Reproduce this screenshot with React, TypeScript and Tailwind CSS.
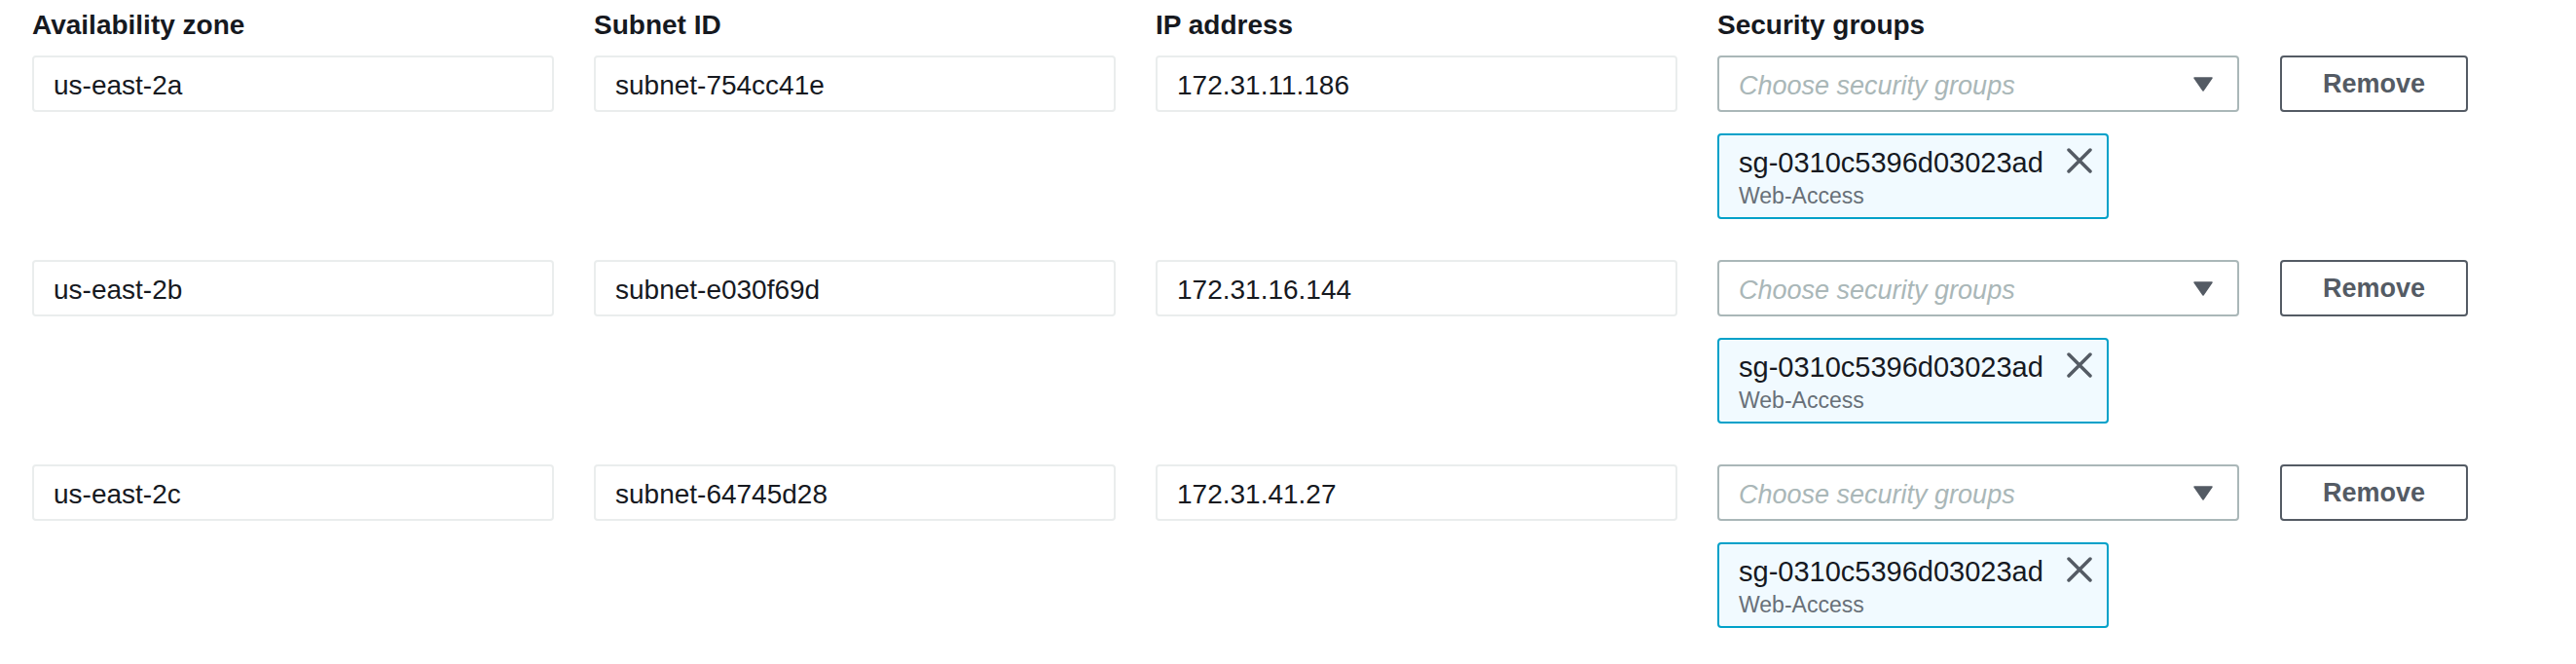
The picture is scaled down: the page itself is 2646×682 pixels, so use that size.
const rows = [
  { az: 'us-east-2a', subnet: 'subnet-754cc41e', ip: '172.31.11.186' },
  { az: 'us-east-2b', subnet: 'subnet-e030f69d', ip: '172.31.16.144' },
  { az: 'us-east-2c', subnet: 'subnet-64745d28', ip: '172.31.41.27' },
]

const headers = ['Availability zone', 'Subnet ID', 'IP address', 'Security groups']

function TextBox({ value }: { value: string }) {
  return (
    <div className="flex h-[58px] w-[536px] items-center rounded-[4px] border-2 border-[#eaeded] bg-white pl-[20px] pt-[4px] text-[28px] leading-[32px] text-[#16191f]">
      {value}
    </div>
  )
}

function GroupSelect() {
  return (
    <div className="flex h-[58px] w-[536px] items-center justify-between rounded-[4px] border-2 border-[#aab7b8] bg-white pl-[20px] pr-[25px]">
      <span className="pt-[4px] text-[27px] italic leading-[32px] text-[#aab7b8]">Choose security groups</span>
      <svg width="20" height="15" viewBox="0 0 20 15">
        <polygon points="1,1 19,1 10,14" fill="#545b64" stroke="#545b64" strokeWidth="1.5" strokeLinejoin="round" />
      </svg>
    </div>
  )
}

function GroupChip() {
  return (
    <div className="w-[402px] h-[88px] rounded-[4px] border-2 border-[#00a1c9] bg-[#f1faff] pl-[20px] pr-[14px] pt-[12px]">
      <div className="flex items-center justify-between">
        <span className="text-[29px] leading-[32px] text-[#16191f]">sg-0310c5396d03023ad</span>
        <svg width="28" height="26" viewBox="0 0 28 26" className="mb-[4px]">
          <path d="M3 2 L25 24 M25 2 L3 24" stroke="#545b64" strokeWidth="3.5" strokeLinecap="round" />
        </svg>
      </div>
      <div className="mt-[4px] text-[23px] leading-[28px] text-[#687078]">Web-Access</div>
    </div>
  )
}

export default function App() {
  return (
    <div className="min-h-screen bg-white pl-[33px] pt-[9px] font-['Liberation_Sans',Arial,sans-serif]">
      {/* Column headings */}
      <div className="flex gap-[41px]">
        {headers.map((h) => (
          <div key={h} className="w-[536px] text-[28px] font-bold leading-[34px] text-[#16191f]">
            {h}
          </div>
        ))}
      </div>

      {/* Subnet rows */}
      <div className="mt-[14px] flex flex-col gap-[42px]">
        {rows.map((r) => (
          <div key={r.az} className="flex items-start gap-[41px]">
            <TextBox value={r.az} />
            <TextBox value={r.subnet} />
            <TextBox value={r.ip} />
            <div className="flex w-[536px] flex-col gap-[22px]">
              <GroupSelect />
              <GroupChip />
            </div>
            <button className="ml-[1px] flex h-[58px] w-[193px] items-center justify-center rounded-[4px] border-2 border-[#545b64] bg-white text-[27px] font-bold text-[#545b64]">
              Remove
            </button>
          </div>
        ))}
      </div>
    </div>
  )
}
